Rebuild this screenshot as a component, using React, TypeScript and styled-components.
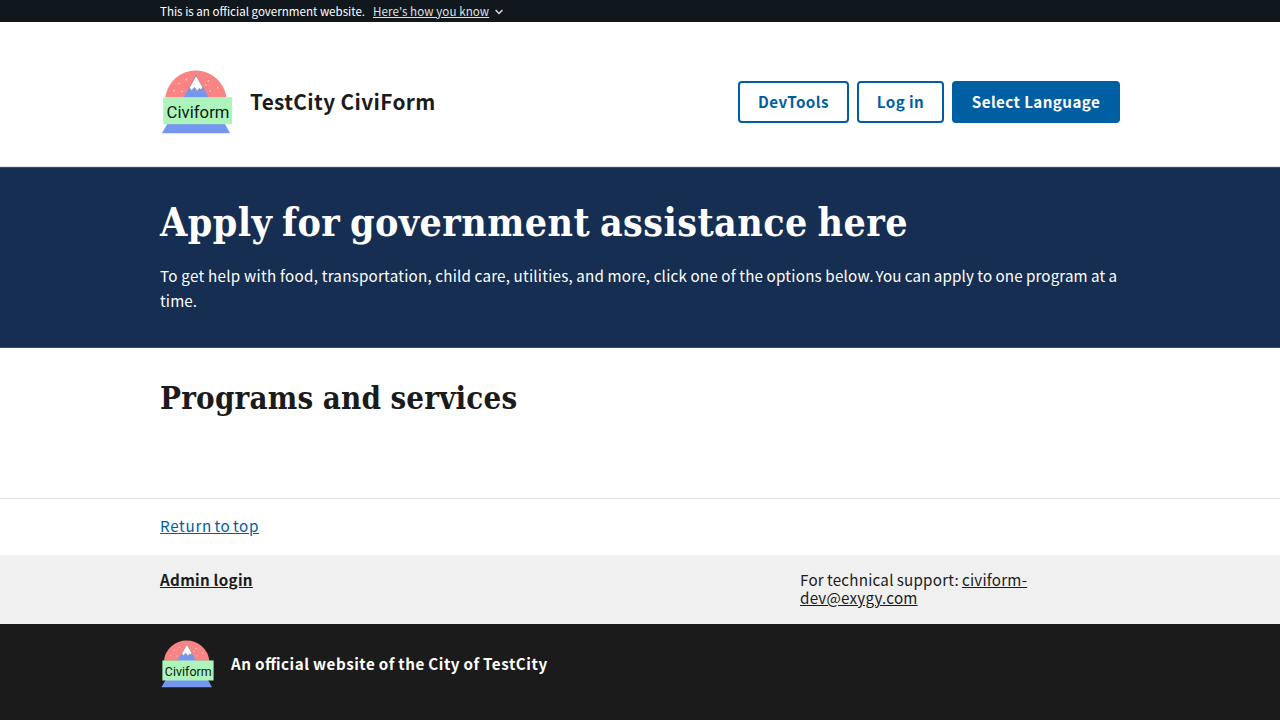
import React from "react";
import styled, { createGlobalStyle } from "styled-components";

const GlobalStyle = createGlobalStyle`
  *, *::before, *::after { box-sizing: border-box; }
  body {
    margin: 0;
    background: #ffffff;
    color: #1b1b1b;
    font-family: "Noto Sans CJK SC", "Open Sans", sans-serif;
    font-size: 15.2px;
    overflow: hidden;
  }
  h1, h2, p { margin: 0; }
`;

const Container = styled.div`
  width: 960px;
  margin: 0 auto;
`;

const Banner = styled.div`
  height: 22px;
  background: #11181d;
  color: #ffffff;
  font-size: 11.57px;
  line-height: 22px;
`;

const BannerRow = styled(Container)`
  display: flex;
  align-items: center;
`;

const BannerText = styled.span<{ $width: number }>`
  width: ${(p) => p.$width}px;
  white-space: nowrap;
`;

const BannerLink = styled(BannerText)`
  margin-left: 8px;
  color: #dfe1e2;
  letter-spacing: 0.08px;
  text-decoration: underline;
`;

const Chevron = styled.svg`
  margin-left: 6px;
  margin-top: 1px;
`;

const Header = styled.header`
  height: 145px;
  padding-top: 48px;
  border-bottom: 1px solid #dfe1e2;
`;

const HeaderRow = styled(Container)`
  display: flex;
  align-items: center;
  height: 64px;
`;

const SiteTitle = styled.div`
  margin-left: 16px;
  padding-bottom: 2px;
  font-size: 20.8px;
  font-weight: 700;
  letter-spacing: 0.36px;
  line-height: 30px;
  white-space: nowrap;
`;

const Actions = styled.nav`
  display: flex;
  gap: 8px;
  margin-left: auto;
`;

const Button = styled.button<{ $width: number; $filled?: boolean }>`
  width: ${(p) => p.$width}px;
  height: 42px;
  padding: 0 0 2px;
  border: 2px solid #005ea2;
  border-radius: 4px;
  background: ${(p) => (p.$filled ? "#005ea2" : "transparent")};
  color: ${(p) => (p.$filled ? "#ffffff" : "#005ea2")};
  font-family: inherit;
  font-size: 15.2px;
  font-weight: 700;
  letter-spacing: 0.4px;
  line-height: 36px;
  white-space: nowrap;
`;

const Hero = styled.section`
  height: 181px;
  padding-top: 31px;
  background: #162e51;
  border-top: 1px solid #005ea2;
  border-bottom: 1px solid #005ea2;
  color: #ffffff;
`;

const HeroTitle = styled.h1`
  font-family: "DejaVu Serif Condensed", "DejaVu Serif", serif;
  font-stretch: condensed;
  font-size: 39px;
  font-weight: 700;
  letter-spacing: 0.45px;
  word-spacing: -3px;
  line-height: 47px;
  white-space: nowrap;
`;

const HeroText = styled.p`
  margin-top: 17px;
  font-size: 15.2px;
  word-spacing: -0.28px;
  line-height: 25px;
`;

const Phrase = styled.span<{ $tracking: number; $start?: number }>`
  margin-left: ${(p) => p.$start ?? 0}px;
  letter-spacing: ${(p) => p.$tracking}px;
`;

const Programs = styled.main`
  height: 150px;
  padding-top: 29px;
`;

const SectionTitle = styled.h2`
  font-family: "DejaVu Serif Condensed", "DejaVu Serif", serif;
  font-stretch: condensed;
  font-size: 31px;
  font-weight: 700;
  letter-spacing: 0.2px;
  word-spacing: -0.6px;
  line-height: 42px;
  white-space: nowrap;
`;

const ReturnBar = styled.div`
  height: 57px;
  padding-top: 17px;
  border-top: 1px solid #dfe1e2;
  letter-spacing: 0.68px;
  word-spacing: -1.6px;
  line-height: 18px;
`;

const TextLink = styled.a<{ $color?: string; $bold?: boolean }>`
  color: ${(p) => p.$color ?? "#1b1b1b"};
  font-weight: ${(p) => (p.$bold ? 700 : 400)};
  text-decoration: underline;
`;

const FooterLinks = styled.div`
  height: 69px;
  padding-top: 15px;
  background: #f0f0f0;
  line-height: 18px;
`;

const FooterGrid = styled(Container)`
  display: grid;
  grid-template-columns: 640px 240px;
`;

const FooterCell = styled.div<{ $tracking: number; $wordGap: number }>`
  letter-spacing: ${(p) => p.$tracking}px;
  word-spacing: ${(p) => p.$wordGap}px;
`;

const Identifier = styled.footer`
  height: 96px;
  padding-top: 16px;
  background: #1b1b1b;
  color: #ffffff;
`;

const IdentifierRow = styled(Container)`
  display: flex;
  align-items: center;
  height: 48px;
`;

const IdentifierText = styled.p`
  margin-left: 16px;
  padding-bottom: 2px;
  font-weight: 700;
  font-feature-settings: "liga" 1;
  letter-spacing: 0.54px;
  word-spacing: -0.6px;
  line-height: 20px;
  white-space: nowrap;
`;

const snow = [
  [14, 20.7], [19, 13.5], [22, 21.3], [26.3, 9.5], [32, 20], [48.5, 11], [50.2, 21], [57.8, 17.5], [46, 15],
];

function Logo({ width, height }: { width: number; height: number }) {
  return (
    <svg width={width} height={height} viewBox="0 0 74 64" aria-label="CiviForm logo">
      <path d="M5.200 27.500A30.900 30.900 0 0 1 66.500 27.500Z" fill="#fa8383" />
      {snow.map(([x, y]) => (
        <circle key={`${x}-${y}`} cx={x} cy={y} r="0.85" fill="#ffd5d3" />
      ))}
      <path d="M23.300 27.500 36.200 5.500 48.800 27.500Z" fill="#7596ee" />
      <path
        d="M36.200 5.700 29.300 17.800 31.700 20.800 34.400 17.300 37.300 21.200 39.700 18.300 41.200 20.300 42.600 16.900Z"
        fill="#fafafa"
        stroke="#777b83"
        strokeWidth="0.5"
      />
      <path d="M7.500 53.500H64.700L70 63.300H2Z" fill="#7596ee" />
      <rect x="3.200" y="27.200" width="68.900" height="27" fill="#acf3bc" />
      <text
        x="6.500"
        y="47.600"
        fontFamily="Roboto, Inter, sans-serif"
        fontSize="16.700"
        fontWeight="400"
        textLength="63"
        fill="#0c1a10"
      >
        Civiform
      </text>
    </svg>
  );
}

export default function App() {
  return (
    <>
      <GlobalStyle />
      <Banner>
        <BannerRow>
          <BannerText $width={205}>This is an official government website.</BannerText>
          <BannerLink $width={116}>Here's how you know</BannerLink>
          <Chevron width="8" height="6" viewBox="0 0 8 6">
            <path d="M.6 1 4 4.400 7.400 1" fill="none" stroke="#dfe1e2" strokeWidth="1.400" />
          </Chevron>
        </BannerRow>
      </Banner>
      <Header>
        <HeaderRow>
          <Logo width={74} height={64} />
          <SiteTitle>TestCity CiviForm</SiteTitle>
          <Actions>
            <Button $width={111}>DevTools</Button>
            <Button $width={87}>Log in</Button>
            <Button $width={168} $filled>Select Language</Button>
          </Actions>
        </HeaderRow>
      </Header>
      <Hero>
        <Container>
          <HeroTitle>Apply for government assistance here</HeroTitle>
          <HeroText>
            <Phrase $tracking={0.31}>To get help with food, </Phrase>
            <Phrase $tracking={0.22}>
              transportation, child care, utilities, and more, click one of the options below.{" "}
            </Phrase>
            <Phrase $tracking={0.12} $start={-1.5}>You can apply to one program at a time.</Phrase>
          </HeroText>
        </Container>
      </Hero>
      <Programs>
        <Container>
          <SectionTitle>Programs and services</SectionTitle>
        </Container>
      </Programs>
      <ReturnBar>
        <Container>
          <TextLink $color="#005ea2">Return to top</TextLink>
        </Container>
      </ReturnBar>
      <FooterLinks>
        <FooterGrid>
          <FooterCell $tracking={0.32} $wordGap={-0.3}>
            <TextLink $bold>Admin login</TextLink>
          </FooterCell>
          <FooterCell $tracking={0.22} $wordGap={-0.6}>
            For technical support: <TextLink>civiform-dev@exygy.com</TextLink>
          </FooterCell>
        </FooterGrid>
      </FooterLinks>
      <Identifier>
        <IdentifierRow>
          <Logo width={55} height={48} />
          <IdentifierText>An official website of the City of TestCity</IdentifierText>
        </IdentifierRow>
      </Identifier>
    </>
  );
}
